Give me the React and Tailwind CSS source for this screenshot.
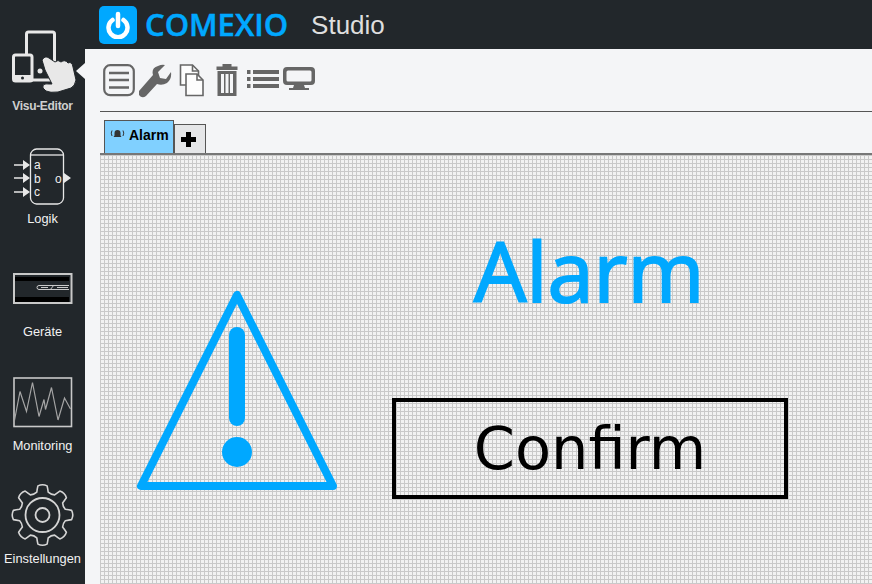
import React from 'react';

const SANS = "font-['Liberation_Sans',Arial,sans-serif]";

function DevicesIcon() {
  return (
    <svg width="85" height="66" viewBox="0 28 85 66" fill="none">
      <rect x="26.5" y="32" width="28" height="48" rx="2" stroke="#e8e8e8" strokeWidth="3" />
      <rect x="13.5" y="55" width="18.5" height="26" rx="2" fill="#22272b" stroke="#e8e8e8" strokeWidth="3" />
      <path d="M13 75h19v6H13z" fill="#e8e8e8" />
      <circle cx="22.5" cy="78" r="1.5" fill="#22272b" />
      <circle cx="40" cy="71" r="2.5" fill="#e8e8e8" />
      <path
        d="M42 60Q45 55 49 58L55 62Q58 59 61 62Q65 59 68 63Q72 61 73 67L76 80Q75 86 71 88L58 92Q50 93 46 91L43 88Q42 83 49 84L52 84L45 70Z"
        fill="#e8e8e8"
        stroke="#22272b"
        strokeWidth="1"
      />
    </svg>
  );
}

function LogicIcon() {
  return (
    <svg width="85" height="61" viewBox="0 146 85 61" fill="none">
      <path d="M30.5 155c0-3 3-6 6-6h21c3 0 6 3 6 6v43c0 3-3 6-6 6h-21c-3 0-6-3-6-6z" stroke="#e8e8e8" strokeWidth="1.3" />
      <path d="M31 155h32" stroke="#e8e8e8" strokeWidth="1.3" />
      <path d="M14 165h13M14 178h13M14 192h13" stroke="#e8e8e8" strokeWidth="1.5" />
      <path d="M23 160l7 5-7 5zM23 173l7 5-7 5zM23 187l7 5-7 5zM64 173l7 5-7 5z" fill="#e8e8e8" />
      <text x="34" y="169" fontSize="12" fill="#f0f0f0" fontFamily="Liberation Sans">a</text>
      <text x="34" y="183" fontSize="12" fill="#f0f0f0" fontFamily="Liberation Sans">b</text>
      <text x="34" y="196" fontSize="12" fill="#f0f0f0" fontFamily="Liberation Sans">c</text>
      <text x="55" y="183" fontSize="12" fill="#f0f0f0" fontFamily="Liberation Sans">o</text>
    </svg>
  );
}

function DeviceIcon() {
  return (
    <svg width="85" height="35" viewBox="0 271 85 35">
      <rect x="14" y="274" width="57.5" height="29" fill="#22272b" stroke="#c9c9c9" strokeWidth="2" />
      <rect x="15" y="277" width="54" height="4" fill="#000" />
      <rect x="15" y="297" width="54" height="5" fill="#000" />
      <path d="M69 285.5H39q-2 0-2 2t2 2h30" fill="none" stroke="#c9c9c9" />
      <path d="M41 287.5h7M57 287.5h11M50 290l4-5" fill="none" stroke="#c9c9c9" />
    </svg>
  );
}

function MonitorIcon() {
  return (
    <svg width="85" height="54" viewBox="0 375 85 54" fill="none">
      <rect x="14" y="378" width="57.5" height="48.5" stroke="#c9c9c9" strokeWidth="1.6" />
      <path d="M14 423l6-31.500 6.500 20 6-29 6.500 34 5-17 1.500 10 6-22 6.500 32.500 6.500-22 6 11" stroke="#a5a5a5" strokeWidth="1.2" />
    </svg>
  );
}

function gearPath() {
  const cx = 42.5;
  const cy = 515;
  const pt = (deg, r) => {
    const a = ((deg - 90) * Math.PI) / 180;
    return `${(cx + r * Math.cos(a)).toFixed(1)} ${(cy + r * Math.sin(a)).toFixed(1)}`;
  };
  let d = '';
  for (let i = 0; i < 8; i++) {
    const a = i * 45;
    d += `${i === 0 ? 'M' : 'L'}${pt(a - 14, 23.5)} `;
    d += `Q${pt(a - 11, 27)} ${pt(a - 9, 29.5)} `;
    d += `Q${pt(a, 31.5)} ${pt(a + 9, 29.5)} `;
    d += `Q${pt(a + 11, 27)} ${pt(a + 14, 23.5)} `;
    d += `Q${pt(a + 22.5, 22)} ${pt(a + 31, 23.5)} `;
  }
  return d + 'Z';
}

function GearIcon() {
  return (
    <svg width="85" height="65" viewBox="0 482 85 65" fill="none">
      <path d={gearPath()} stroke="#d4d4d4" strokeWidth="1.6" strokeLinejoin="round" />
      <circle cx="42.5" cy="515" r="17" stroke="#d4d4d4" strokeWidth="1.8" />
      <circle cx="42.5" cy="515" r="7" stroke="#d4d4d4" strokeWidth="1.8" />
    </svg>
  );
}

function NavItem({ icon, label, top, gap }) {
  return (
    <div className="flex flex-col items-center" style={{ marginTop: top }}>
      {icon}
      <span className={`text-[12.8px] text-[#f2f2f2] leading-[14px] ${SANS}`} style={{ marginTop: gap }}>{label}</span>
    </div>
  );
}

function Sidebar() {
  return (
    <aside className="relative w-[85px] shrink-0 bg-[#22272b] pt-[28px] flex flex-col">
      <div className="flex flex-col items-center">
        <DevicesIcon />
        <span className={`mt-[5px] text-xs font-bold text-[#cfcfcf] leading-[14px] tracking-[-0.3px] ${SANS}`}>Visu-Editor</span>
      </div>
      <NavItem icon={<LogicIcon />} label="Logik" top={33} gap={5} />
      <NavItem icon={<DeviceIcon />} label="Geräte" top={45} gap={19} />
      <NavItem icon={<MonitorIcon />} label="Monitoring" top={36} gap={10} />
      <NavItem icon={<GearIcon />} label="Einstellungen" top={29} gap={5} />
      <div className="absolute left-[76px] top-[63px] w-0 h-0 border-y-[8px] border-y-transparent border-r-[9px] border-r-[#f4f5f7]" />
    </aside>
  );
}

function Header() {
  return (
    <header className="h-[49px] bg-[#22272b] flex items-center pl-[14px] shrink-0">
      <div className="w-[38px] h-[38px] rounded-[5px] bg-[#00a8ff] flex items-center justify-center">
        <svg width="26" height="28" viewBox="0 0 26 28" fill="none" stroke="#fff" strokeWidth="4.5" strokeLinecap="round">
          <path d="M7.5 9a9.500 9.500 0 1 0 11 0" />
          <path d="M13 3v12" />
        </svg>
      </div>
      <span className="ml-[8px] text-[31px] font-semibold [-webkit-text-stroke:0.5px_#00a8ff] text-[#00a8ff] font-['Open_Sans',sans-serif] leading-none">COMEXIO</span>
      <span className={`ml-[23px] text-[26px] text-[#dedede] leading-none ${SANS}`}>Studio</span>
    </header>
  );
}

function Toolbar() {
  return (
    <div className="h-[63px] ml-[15px] border-b border-[#555] flex items-start pt-[15px] pl-[3px] shrink-0">
      <svg width="32" height="33" viewBox="103 64 32 33" fill="none" stroke="#666" strokeWidth="2.2">
        <rect x="104.200" y="65.200" width="29.600" height="30" rx="6" />
        <path d="M109 73h20M109 80h20M109 87.500h20" strokeWidth="2.400" />
      </svg>
      <svg width="33" height="34" viewBox="139 63 33 34" fill="#666" className="ml-[4px]">
        <path d="M139 90L153 74Q151 67 158 65Q162 63 165 64L158 71L160 77L166 78L171 71Q172 78 167 82Q162 85 157 83L146 95Q142 98 139 94Z" />
      </svg>
      <svg width="26" height="33" viewBox="179 64 26 33" fill="#fdfdfd" stroke="#666" strokeWidth="1.600" className="ml-[7px]">
        <path d="M180.500 65h12l6 6v14h-18z" />
        <path d="M192.500 65v6h6" fill="none" />
        <path d="M186 74h11l6 6v15.500h-17z" />
        <path d="M197 74v6h6" fill="none" />
      </svg>
      <svg width="22" height="33" viewBox="216.500 64 22 33" fill="#666" className="ml-[11px]">
        <path d="M217 66.500h6V64h9v2.500h6v3.500h-21zM218 71h19v25h-19z" />
        <path d="M221.500 74h3v19h-3zM226 74h3v19h-3zM230.500 74h3v19h-3z" fill="#f4f5f7" />
      </svg>
      <svg width="32" height="20" viewBox="247 69 32 20" fill="#666" className="ml-[8.500px] mt-[5px]">
        <path d="M247 70h3.500v4H247zM247 77h3.500v4H247zM247 84h3.500v4H247zM253 70h26v4h-26zM253 77h26v4h-26zM253 84h26v4h-26z" />
      </svg>
      <svg width="32" height="24" viewBox="283 67 32 24" fill="#666" className="ml-[4px] mt-[3px]">
        <path fillRule="evenodd" d="M287 67h24a4 4 0 0 1 4 4v10a4 4 0 0 1-4 4h-24a4 4 0 0 1-4-4V71a4 4 0 0 1 4-4zm1 3.500a1.500 1.500 0 0 0-1.500 1.500v8a1.500 1.500 0 0 0 1.500 1.500h22a1.500 1.500 0 0 0 1.500-1.500v-8a1.500 1.500 0 0 0-1.500-1.500z" />
        <path d="M294 85h10l1 3h4v2h-20v-2h4z" />
      </svg>
    </div>
  );
}

function Tabs() {
  return (
    <div className="h-[41px] ml-[15px] flex items-end pl-[4px] shrink-0">
      <div className="h-[33px] w-[70px] bg-[#80d0ff] border border-b-0 border-[#555] flex items-start pt-[6px] pl-[5px] gap-[4px]">
        <svg width="15" height="12" viewBox="0 0 15 12" fill="none" className="mt-[1px]">
          <path d="M7.500 2a3 3 0 0 1 3 3v2.500l1 1.500h-8l1-1.500V5a3 3 0 0 1 3-3z" fill="#333" />
          <path d="M2 2.500Q.5 5 2 8M13 2.500Q14.500 5 13 8" stroke="#333" />
        </svg>
        <span className={`text-sm font-bold text-black leading-[16px] ${SANS}`}>Alarm</span>
      </div>
      <div className="h-[29px] w-[32px] bg-[#e5e6e8] border border-b-0 border-[#555] flex items-center justify-center pr-[3px]">
        <svg width="15" height="15" viewBox="0 0 15 15" fill="#000"><path d="M5 0h5v5h5v5h-5v5H5v-5H0V5h5z" /></svg>
      </div>
    </div>
  );
}

function Canvas() {
  return (
    <div className="relative flex-1 ml-[15px] border-t-2 border-[#777] bg-[#f2f2f2] bg-[linear-gradient(#c9c9c9_1px,transparent_1px),linear-gradient(90deg,#c9c9c9_1px,transparent_1px)] bg-[size:4px_4px] overflow-hidden">
      <svg width="215" height="210" viewBox="130 285 215 210" fill="none" className="absolute left-[30px] top-[130px]">
        <path d="M237 295L141 486h192z" stroke="#00a8ff" strokeWidth="8" strokeLinejoin="round" />
        <rect x="229" y="327" width="16" height="99" rx="8" fill="#00a8ff" />
        <circle cx="237" cy="452" r="15" fill="#00a8ff" />
      </svg>
      <div className="absolute left-[374px] top-[73px] text-[83px] [-webkit-text-stroke:2px_#00a8ff] leading-none text-[#00a8ff] font-['Open_Sans',sans-serif]">Alarm</div>
      <div className="absolute left-[292px] top-[243px] w-[396px] h-[101px] border-4 border-black flex items-center justify-center text-[59px] leading-none text-black font-['DejaVu_Sans',sans-serif]">Confirm</div>
    </div>
  );
}

export default function App() {
  return (
    <div className="flex w-[872px] h-[584px] overflow-hidden bg-[#f4f5f7]">
      <Sidebar />
      <main className="flex-1 flex flex-col min-w-0">
        <Header />
        <Toolbar />
        <Tabs />
        <Canvas />
      </main>
    </div>
  );
}
